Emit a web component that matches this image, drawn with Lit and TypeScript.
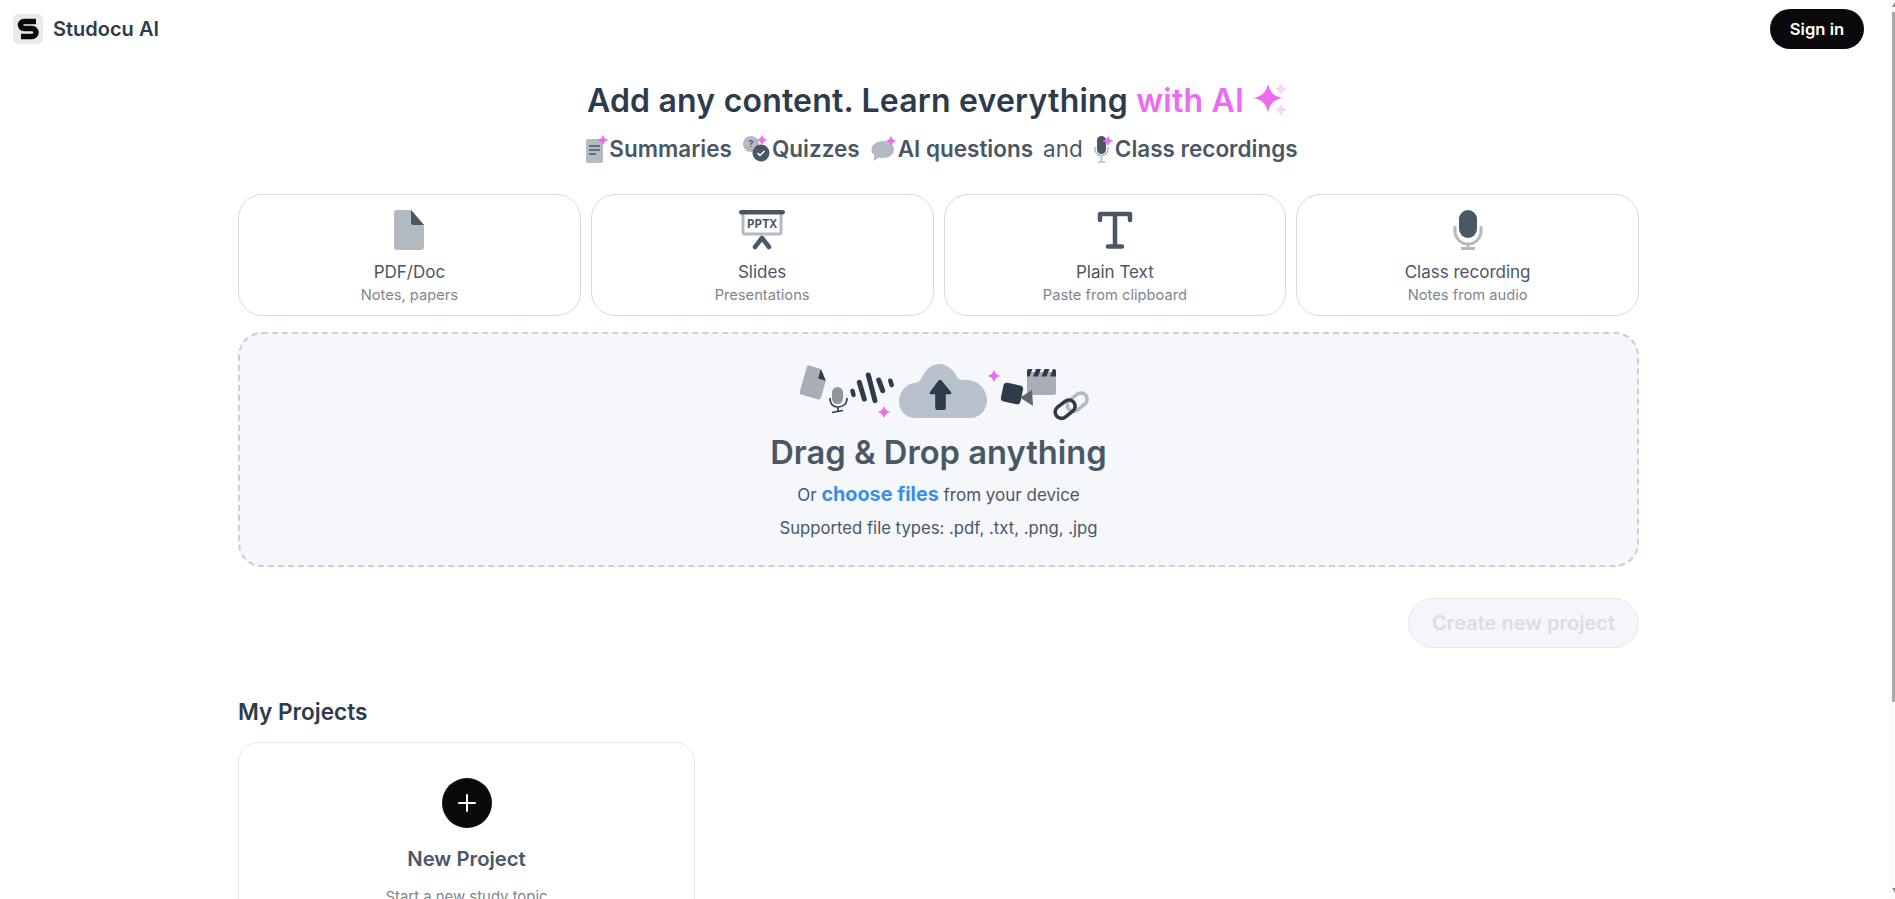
import { LitElement, html, css, svg } from 'lit';
import { customElement } from 'lit/decorators.js';

const spark = (x: number, y: number, r: number, fill = '#ec6bf2') =>
  svg`<path fill=${fill} d="M${x} ${y - r}C${x + r * 0.2} ${y - r * 0.35} ${x + r * 0.35} ${y - r * 0.2} ${x + r} ${y}C${x + r * 0.35} ${y + r * 0.2} ${x + r * 0.2} ${y + r * 0.35} ${x} ${y + r}C${x - r * 0.2} ${y + r * 0.35} ${x - r * 0.35} ${y + r * 0.2} ${x - r} ${y}C${x - r * 0.35} ${y - r * 0.2} ${x - r * 0.2} ${y - r * 0.35} ${x} ${y - r}Z"/>`;

const logo = html`<svg width="30" height="30" viewBox="0 0 30 30">
  <rect width="30" height="30" rx="5" fill="#e8ebee"/>
  <path fill="none" stroke="#0a0a0a" stroke-width="5.500" stroke-linejoin="round" d="M23 7.500H11a3.500 3.500 0 0 0 0 7h8a4 4 0 0 1 0 8H8"/>
</svg>`;

const docMini = html`<svg class="mini" width="24" height="28" viewBox="0 0 24 28">
  <rect x="1" y="4" width="17" height="24" rx="2" fill="#b4bac1"/>
  <path stroke="#4a5765" stroke-width="1.400" d="M4 11h11M4 15h11M4 19h7"/>
  ${spark(18, 5, 5.500)}
</svg>`;
const quizMini = html`<svg class="mini" width="30" height="28" viewBox="0 0 30 28">
  <circle cx="9" cy="9" r="8" fill="#b4bac1"/>
  <text x="6.400" y="12" font-size="9" font-family="Inter" fill="#4a5765">?</text>
  <circle cx="19" cy="18" r="8.500" fill="#4a5765"/>
  <path fill="none" stroke="#fff" stroke-width="1.500" d="M15.500 18l2.500 2.500 4.500-4.500"/>
  ${spark(20, 5, 5.500)}
</svg>`;
const chatMini = html`<svg class="mini" width="28" height="28" viewBox="0 0 28 28">
  <path fill="#b4bac1" d="M13 6c6 0 11 3.500 11 8.500S19 23 13 23c-1.500 0-3-.2-4-.6L3.500 26l1-5.500C2.500 19 1.500 17 1.500 14.500 1.500 9.500 7 6 13 6Z"/>
  ${spark(21, 6, 5.500)}
</svg>`;
const micMini = html`<svg class="mini" width="22" height="28" viewBox="0 0 22 28">
  <rect x="4" y="1" width="9" height="18" rx="4.500" fill="#4a5765"/>
  <path fill="none" stroke="#b4bac1" stroke-width="1.600" d="M2 12v2a6.500 6.500 0 0 0 13 0v-2M8.500 20.500V27M5 27h7"/>
  ${spark(15, 6, 5.500)}
</svg>`;

const docIcon = html`<svg width="30" height="40" viewBox="0 0 30 40">
  <path fill="#b4bac1" d="M3 0h14l13 15v22a3 3 0 0 1-3 3H3a3 3 0 0 1-3-3V3a3 3 0 0 1 3-3Z"/>
  <path fill="#4a5765" d="M17 0l13 15H19a2 2 0 0 1-2-2Z"/>
</svg>`;
const slidesIcon = html`<svg width="46" height="40" viewBox="0 0 46 40">
  <path fill="none" stroke="#b4bac1" stroke-width="3" d="M4 3v19a2 2 0 0 0 2 2h34a2 2 0 0 0 2-2V3"/>
  <rect x="0" y="0" width="46" height="4.500" rx="2.200" fill="#4a5765"/>
  <text x="23" y="17.500" text-anchor="middle" font-size="13" font-weight="700" font-family="Liberation Mono" textLength="30" lengthAdjust="spacingAndGlyphs" fill="#4a5765">PPTX</text>
  <path fill="none" stroke="#4a5765" stroke-width="4.500" stroke-linecap="round" stroke-linejoin="round" d="M16 37l7-9 7 9"/>
</svg>`;
const textIcon = html`<svg width="36" height="38" viewBox="0 0 36 38">
  <path fill="none" stroke="#4a5765" stroke-width="4.500" stroke-linecap="round" stroke-linejoin="round" d="M3 9V3h30v6M18 3v32M11 35.500h14"/>
</svg>`;
const micIcon = html`<svg width="30" height="40" viewBox="0 0 30 40">
  <rect x="6" y="0" width="18" height="28" rx="9" fill="#4a5765"/>
  <path fill="none" stroke="#b4bac1" stroke-width="3" d="M2 16v5a13 13 0 0 0 26 0v-5M15 34v5M8 38.500h14"/>
</svg>`;

const dropArt = html`<svg class="drop__art" width="295" height="62" viewBox="0 0 295 62">
  <g transform="rotate(16 18 22)">
    <path fill="#a9adb5" d="M9 7.500h12l8 10v18a2 2 0 0 1-2 2H9a2 2 0 0 1-2-2v-26a2 2 0 0 1 2-2Z"/>
    <path fill="#2e3b4b" d="M21 7.500l8 10h-8Z"/>
  </g>
  <rect x="36" y="27" width="11" height="17" rx="5.500" fill="#8f979e"/>
  <path fill="none" stroke="#2e3b4b" stroke-width="1.700" d="M34 38c0 6 3 9 8 9s9-3 9-9M42 47v4.500M36 52.500l11-2"/>
  <g stroke="#2e3b4b" stroke-linecap="round" fill="none" stroke-width="5">
    <path stroke-width="4.500" d="M56.500 31l1 4"/><path d="M63.300 22.300l5 16.700"/><path d="M72.300 15l6.700 25.700"/><path d="M82.700 20l4 10.700"/><path stroke-width="4.500" d="M94.300 20.700l1.400 4.300"/>
  </g>
  ${spark(88, 52, 6.500)}
  <path fill="#b8c2cc" d="M120 58C109 58 103 50 103 42C103 32 110 24 118 23C122 23 125 20 126 17C130 9 136 4 143 4C151 4 158 10 161 17C163 20 166 20 170 20C183 20 191 30 191 40C191 50 184 58 174 58Z"/>
  <path fill="#2e3b4b" d="M142.500 20.500a2 2 0 0 1 3 0l9.500 11.500a1.300 1.300 0 0 1-1 2.200h-4.200v13.800a2 2 0 0 1-2 2h-6.600a2 2 0 0 1-2-2V34.200H135a1.300 1.300 0 0 1-1-2.200Z"/>
  ${spark(198, 16, 6.500)}
  <rect x="231" y="12" width="29" height="23" rx="2.500" fill="#a9adb5"/>
  <path fill="#2e3b4b" d="M233 9h3.500l-3 7.500H231V11a2 2 0 0 1 2-2ZM240 9h5l-3 7.500h-5ZM248.500 9h5l-3 7.500h-5ZM257 9h1a2 2 0 0 1 2 2v5.500h-6Z"/>
  <g transform="rotate(12 216 33.500)">
    <rect x="206" y="24" width="20" height="19" rx="3.500" fill="#2e3b4b"/>
  </g>
  <path fill="#5a6673" d="M224 37.500l12-7.500 1 16Z"/>
  <rect x="270" y="36" width="22" height="12.500" rx="6.250" transform="rotate(-38 281 42)" fill="none" stroke="#b4bac1" stroke-width="3.600"/>
  <rect x="258" y="43" width="22" height="12.500" rx="6.250" transform="rotate(-38 269 49)" fill="none" stroke="#2e3b4b" stroke-width="3.600"/>
</svg>`;

const sources = [
  { icon: docIcon, title: 'PDF/Doc', sub: 'Notes, papers' },
  { icon: slidesIcon, title: 'Slides', sub: 'Presentations' },
  { icon: textIcon, title: 'Plain Text', sub: 'Paste from clipboard' },
  { icon: micIcon, title: 'Class recording', sub: 'Notes from audio' },
];

@customElement('app-root')
export default class App extends LitElement {
  static override styles = css`
    :host {
      display: block;
      position: relative;
      height: 899px;
      overflow: hidden;
      background: #fff;
      font-family: 'Inter', 'Liberation Sans', sans-serif;
      color: #2e3b4b;
    }
    .app__header {
      display: flex;
      align-items: center;
      justify-content: space-between;
      height: 58px;
      padding: 0 31px 0 13px;
    }
    .app__brand {
      display: flex;
      align-items: center;
      gap: 10px;
      font-size: 20px;
      font-weight: 600;
    }
    .app__signin {
      display: flex;
      align-items: center;
      justify-content: center;
      width: 94px;
      height: 40px;
      border-radius: 20px;
      background: #0a0a0a;
      color: #fff;
      font-size: 16.6px;
      font-weight: 600;
    }
    .app__main {
      display: flex;
      flex-direction: column;
      width: 1401px;
      margin-left: 238px;
    }
    .app__title {
      display: flex;
      justify-content: center;
      align-items: center;
      gap: 10px;
      height: 60px;
      margin-top: 12px;
      font-size: 32px;
      font-weight: 600;
      letter-spacing: 0.2px;
    }
    .app__title em {
      font-style: normal;
      color: #ec6bf2;
    }
    .app__features {
      display: flex;
      justify-content: center;
      align-items: center;
      height: 37px;
      margin-left: 6px;
      gap: 10px;
      font-size: 22.5px;
      font-weight: 600;
      color: #4a5765;
    }
    .app__feature {
      display: flex;
      align-items: center;
    }
    .app__and {
      font-weight: 400;
    }
    .app__sources {
      display: grid;
      grid-template-columns: repeat(4, 1fr);
      gap: 10px;
      margin-top: 27px;
    }
    .source {
      display: flex;
      flex-direction: column;
      align-items: center;
      height: 122px;
      box-sizing: border-box;
      padding-top: 15px;
      border: 1px solid #d9dcdf;
      border-radius: 24px;
    }
    .source__icon {
      display: flex;
      align-items: center;
      height: 40px;
    }
    .source__title {
      margin-top: 12px;
      font-size: 17px;
      color: #4a5765;
    }
    .source__sub {
      margin-top: 4px;
      font-size: 14.7px;
      color: #80868d;
    }
    .drop {
      display: flex;
      flex-direction: column;
      align-items: center;
      height: 235px;
      box-sizing: border-box;
      margin-top: 16px;
      padding-top: 26px;
      border: 2px dashed #c9d0d8;
      border-radius: 24px;
      background: #f5f7fb;
      color: #4a5765;
    }
    .drop__art {
      margin-left: 9px;
    }
    .drop__title {
      margin-top: 10px;
      font-size: 32.7px;
      line-height: 40px;
      font-weight: 600;
    }
    .drop__line {
      margin-top: 10px;
      font-size: 17px;
      line-height: 24px;
    }
    .drop__line b {
      font-size: 19.8px;
      font-weight: 700;
      color: #3a8ee8;
    }
    .drop__types {
      margin-top: 11px;
      font-size: 16.7px;
      line-height: 20px;
    }
    .app__actions {
      display: flex;
      justify-content: flex-end;
      margin-top: 31px;
    }
    .create {
      display: flex;
      align-items: center;
      justify-content: center;
      width: 231px;
      height: 50px;
      box-sizing: border-box;
      border: 1px solid #e6e9ec;
      border-radius: 25px;
      background: #f4f6fa;
      color: #d9dde2;
      font-size: 20px;
      font-weight: 600;
    }
    .projects__title {
      margin-top: 50px;
      font-size: 22.6px;
      font-weight: 600;
    }
    .project {
      display: flex;
      flex-direction: column;
      align-items: center;
      width: 457px;
      height: 200px;
      box-sizing: border-box;
      margin-top: 17px;
      padding-top: 35px;
      border: 1px solid #e6e8eb;
      border-radius: 20px;
    }
    .project__add {
      display: flex;
      align-items: center;
      justify-content: center;
      width: 50px;
      height: 50px;
      border-radius: 50%;
      background: #0a0a0a;
    }
    .project__title {
      margin-top: 18px;
      font-size: 20.3px;
      font-weight: 600;
      color: #4a5765;
    }
    .project__sub {
      margin-top: 17px;
      font-size: 14.9px;
      color: #80868d;
    }
    .scrollbar {
      position: absolute;
      top: 0;
      right: 0;
      bottom: 0;
      width: 6px;
      background: #fafafa;
    }
    .scrollbar__thumb {
      position: absolute;
      top: 12px;
      right: 0;
      width: 3px;
      height: 690px;
      background: #a8a8a8;
    }
    .scrollbar__arrow {
      position: absolute;
      right: 0;
      width: 0;
      height: 0;
      border-left: 3px solid transparent;
    }
    .scrollbar__arrow--up {
      top: 2px;
      border-bottom: 5px solid #8a8a8a;
    }
    .scrollbar__arrow--down {
      bottom: 6px;
      border-top: 5px solid #8a8a8a;
    }
  `;

  override render() {
    return html`
      <div class="app__header">
        <div class="app__brand">${logo}<span>Studocu AI</span></div>
        <div class="app__signin">Sign in</div>
      </div>
      <div class="app__main">
        <div class="app__title">
          <span>Add any content. Learn everything <em>with AI</em></span>
          <svg width="36" height="36" viewBox="0 0 36 36">
            ${spark(14, 16, 14)}${spark(27, 7, 6.5, '#f8d4fa')}${spark(27, 28, 6.5, '#f8d4fa')}
          </svg>
        </div>
        <div class="app__features">
          <span class="app__feature">${docMini}Summaries</span>
          <span class="app__feature">${quizMini}Quizzes</span>
          <span class="app__feature">${chatMini}AI questions</span>
          <span class="app__and">and</span>
          <span class="app__feature">${micMini}Class recordings</span>
        </div>
        <div class="app__sources">
          ${sources.map(
            (s) => html`
              <div class="source">
                <div class="source__icon">${s.icon}</div>
                <div class="source__title">${s.title}</div>
                <div class="source__sub">${s.sub}</div>
              </div>
            `,
          )}
        </div>
        <div class="drop">
          ${dropArt}
          <div class="drop__title">Drag &amp; Drop anything</div>
          <div class="drop__line">Or <b>choose files</b> from your device</div>
          <div class="drop__types">Supported file types: .pdf, .txt, .png, .jpg</div>
        </div>
        <div class="app__actions"><div class="create">Create new project</div></div>
        <div class="projects__title">My Projects</div>
        <div class="project">
          <div class="project__add">
            <svg width="20" height="20" viewBox="0 0 20 20">
              <path stroke="#fff" stroke-width="2" stroke-linecap="round" d="M10 2v16M2 10h16"/>
            </svg>
          </div>
          <div class="project__title">New Project</div>
          <div class="project__sub">Start a new study topic</div>
        </div>
      </div>
      <div class="scrollbar">
        <div class="scrollbar__arrow scrollbar__arrow--up"></div>
        <div class="scrollbar__thumb"></div>
        <div class="scrollbar__arrow scrollbar__arrow--down"></div>
      </div>
    `;
  }
}
